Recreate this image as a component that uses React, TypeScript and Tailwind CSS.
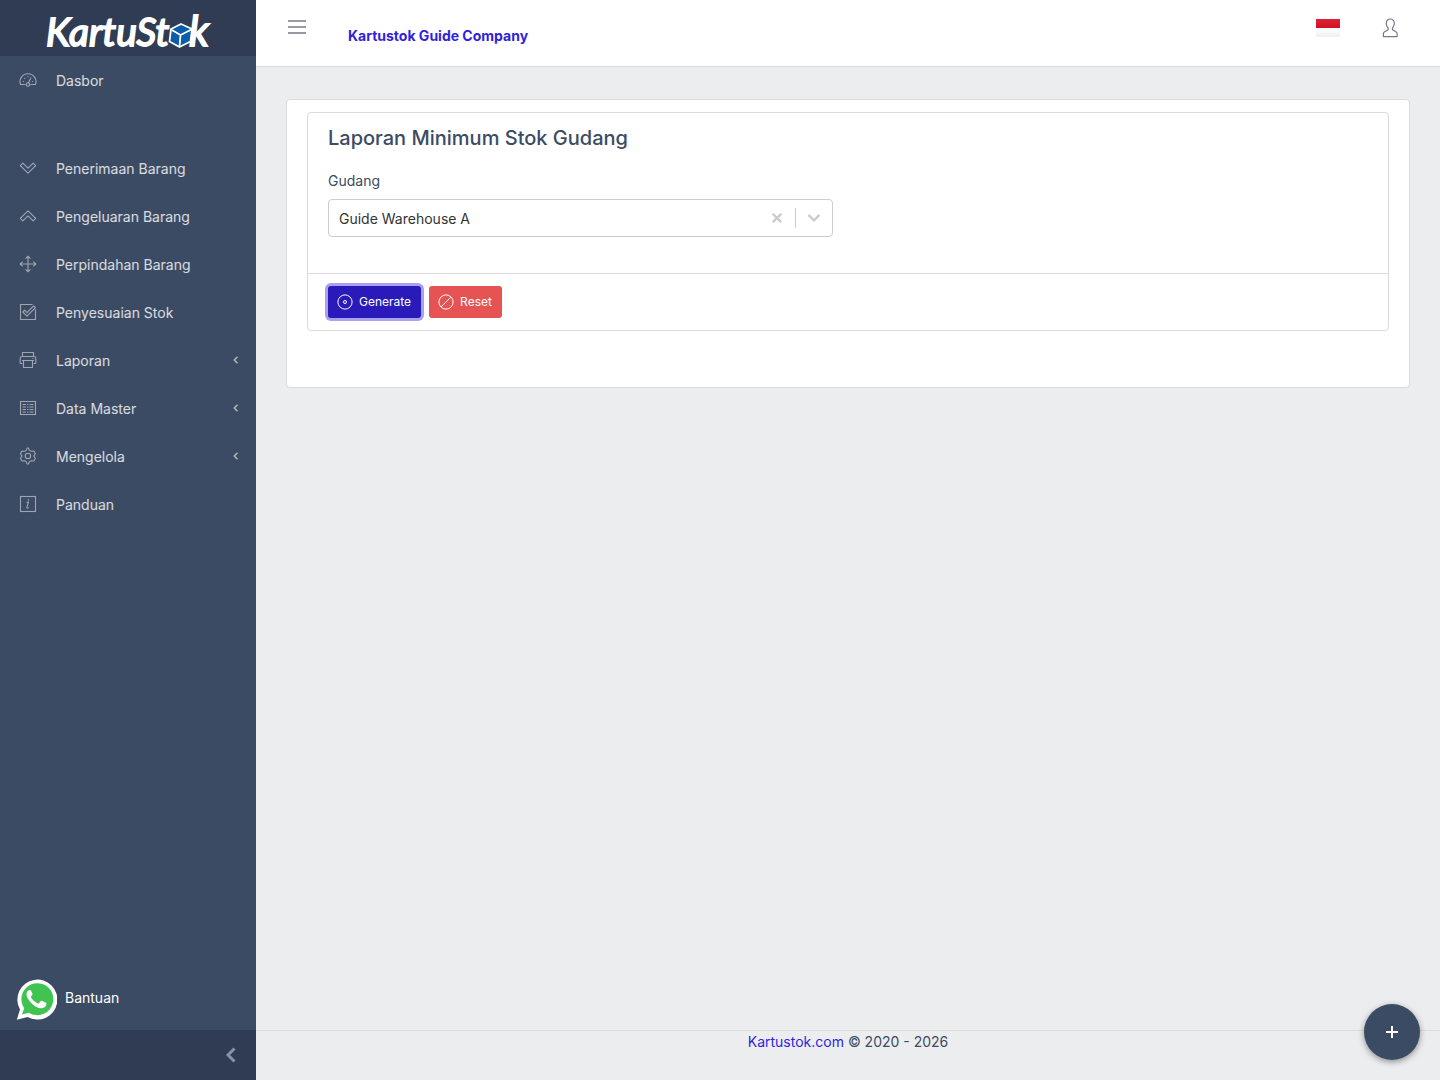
import { useState, ReactNode } from "react";

interface NavItem {
    label: string;
    icon: ReactNode;
    dropdown?: boolean;
}

function Icon({ children, className = "size-[18px]" }: { children: ReactNode; className?: string }) {
    return (
        <svg className={className} viewBox="0 0 18 18" fill="none" stroke="currentColor" strokeWidth="1.1" aria-hidden="true">
            {children}
        </svg>
    );
}

const dashboard: NavItem = {
    label: "Dasbor",
    icon: (
        <Icon>
            <path d="M6.5 13.5h-5a8 8 0 1 1 15 0h-5" />
            <circle cx="9" cy="13.5" r="1.7" />
            <path d="M9.5 11.8 12 6.5M4 10.5h1M13 10.5h1M5.3 6.8l.8.8M9 5v1" />
        </Icon>
    ),
};

const items: NavItem[] = [
    {
        label: "Penerimaan Barang",
        icon: <Icon><path d="M9 14.2 1.3 6.6l2.5-2.5L9 9.2l5.2-5.1 2.5 2.5z" strokeLinejoin="round" /></Icon>,
    },
    {
        label: "Pengeluaran Barang",
        icon: <Icon><path d="M9 3.8 1.3 11.4l2.5 2.5L9 8.8l5.2 5.1 2.5-2.5z" strokeLinejoin="round" /></Icon>,
    },
    {
        label: "Perpindahan Barang",
        icon: (
            <Icon>
                <path d="M9 1.5v15M1.5 9h15M6.6 3.6 9 1.2l2.4 2.4M6.6 14.4 9 16.8l2.4-2.4M3.6 6.6 1.2 9l2.4 2.4M14.4 6.6 16.8 9l-2.4 2.4" />
            </Icon>
        ),
    },
    {
        label: "Penyesuaian Stok",
        icon: (
            <Icon>
                <path d="M13.5 1.5h-12v15h15V6.5" />
                <path d="m8 13.2-4.2-4.2 1.8-1.8L8 9.6l6.6-6.8 1.9 1.8z" strokeLinejoin="round" />
            </Icon>
        ),
    },
    {
        label: "Laporan",
        dropdown: true,
        icon: (
            <Icon>
                <path d="M3.5 5.5v-4h11v4M3.5 12.5H1.8c-.4 0-.6-.2-.6-.6V7.3c0-1 .8-1.8 1.8-1.8h12c1 0 1.8.8 1.8 1.8v4.6c0 .4-.2.6-.6.6h-1.7M3 9.5h12M4.5 9.5v7h9v-7M13.5 7.5h1" />
            </Icon>
        ),
    },
    {
        label: "Data Master",
        dropdown: true,
        icon: (
            <Icon>
                <rect x="1.5" y="2.5" width="15" height="13" />
                <path d="M3.5 5.5H7M8 5.5h1.5M10.5 5.5h4M3.5 8H7M8 8h1.5M10.5 8h4M3.5 10.5H7M8 10.5h1.5M10.5 10.5h4M3.5 13H7M8 13h1.5M10.5 13h4" />
            </Icon>
        ),
    },
    {
        label: "Mengelola",
        dropdown: true,
        icon: (
            <Icon>
                <path
                    d="M7.2 3.4 8.2 1h1.2l1.2 2.4 1.5.9 2.7-.3 1.6 2.7-1.6 2.2v.2l1.6 2.2-1.6 2.7-2.7-.3-1.5.9L9.4 17H8.2l-1-2.4-1.5-.9-2.8.3-1.5-2.7L3 9.1v-.2L1.4 6.7 2.9 4l2.8.3z"
                    strokeLinejoin="round"
                />
                <circle cx="8.9" cy="9" r="2.7" />
            </Icon>
        ),
    },
    {
        label: "Panduan",
        icon: (
            <Icon>
                <rect x="1.5" y="1.5" width="15" height="15" />
                <path d="M7.5 7.5 9.5 7l-1.6 5.3c-.2.9.7 1.5 1.9.2M9.3 4v1.4" />
            </Icon>
        ),
    },
];

function NavLink({ item }: { item: NavItem }) {
    return (
        <a href="#" className="flex h-12 items-center pr-4 pl-[19px] text-sm text-white/80 hover:bg-[#321fdb] hover:text-white">
            <span className="text-white/50">{item.icon}</span>
            <span className="ml-[19px] pt-0.5">{item.label}</span>
            {item.dropdown && (
                <svg className="ml-auto h-2 w-2 text-white/60" viewBox="0 0 8 8" fill="none" stroke="currentColor" strokeWidth="1.5">
                    <path d="M5.5.8 2.3 4l3.2 3.2" />
                </svg>
            )}
        </a>
    );
}

function Logo() {
    return (
        <svg className="h-14 w-[170px]" viewBox="0 0 170 56" role="img" aria-label="KartuStok">
            <g fill="#fff" stroke="#fff" strokeWidth="1.8" fontFamily="Lato, sans-serif" fontWeight="400" fontStyle="italic">
                <text x="3" y="46" fontSize="39">KartuSt</text>
                <text x="146" y="46" fontSize="42">k</text>
            </g>
            {/* box mark standing in for the letter o */}
            <path d="M138 24 149 29l-1.500 12.500L136.500 47l-10-5.500L128 29z" fill="#0b5cab" stroke="#fff" strokeWidth="1.800" strokeLinejoin="round" />
            <path d="m128 29.500 9.500 5.500 11-5.500M137.500 35l-1 12" fill="none" stroke="#fff" strokeWidth="1.800" />
        </svg>
    );
}

function Sidebar() {
    return (
        <aside className="flex min-h-screen w-64 shrink-0 flex-col bg-[#3c4b64]">
            <a href="#" className="flex h-14 items-center justify-center bg-[#303c54]">
                <Logo />
            </a>
            <nav className="flex flex-1 flex-col">
                <NavLink item={dashboard} />
                <div className="h-10" />
                {items.map((item) => (
                    <NavLink key={item.label} item={item} />
                ))}
            </nav>
            <a href="#" className="mb-[10px] ml-4 flex items-center gap-2 text-sm text-white">
                <svg className="size-[41px]" viewBox="0 0 41 41" aria-hidden="true">
                    <path d="M.8 40.700 4 30.500A20 20 0 1 1 11.500 38z" fill="#fff" />
                    <path d="M6 35.500l2.200-6.300a16 16 0 1 1 4.700 4.500z" fill="#40c351" />
                    <path
                        d="M15 11.800c-.4-.8-.8-.8-1.300-.8-1 0-3.200 1.300-3.200 4.200 0 2.800 2 5.600 4.500 8.500 3 3.400 6.700 5.600 10.100 5.600 2.700 0 4.900-1.700 5.200-3.600.2-1.300.2-1.600-.3-1.900l-4-2c-.5-.2-.9-.2-1.300.3l-1.700 2.100c-.3.4-.7.4-1.200.2-3-1.300-5.300-3.400-6.800-6.100-.2-.5-.1-.8.200-1.100.9-1 1.500-1.600 1.300-2.300z"
                        fill="#fff"
                    />
                </svg>
                <span className="pb-1">Bantuan</span>
            </a>
            <button type="button" aria-label="Minimize sidebar" className="flex h-[50px] items-center justify-end bg-[#303c54] pr-5 text-[#8a93a2]">
                <svg className="h-4 w-[10px]" viewBox="0 0 10 16" fill="none" stroke="currentColor" strokeWidth="3">
                    <path d="M8.500 1.500 2 8l6.500 6.500" />
                </svg>
            </button>
        </aside>
    );
}

function Header() {
    return (
        <header className="flex h-[67px] items-start border-b border-[#d8dbe0] bg-white">
            <button type="button" aria-label="Toggle menu" className="mt-[18px] ml-8 text-[#7b7986]">
                <svg className="size-[18px]" viewBox="0 0 18 18" stroke="currentColor" strokeWidth="1.5">
                    <path d="M0 2.900h18M0 9h18M0 15.100h18" />
                </svg>
            </button>
            <a href="#" className="mt-[26px] ml-[42px] text-sm font-bold text-[#321fdb]">
                Kartustok Guide Company
            </a>
            <div className="mt-4 mr-10 ml-auto flex items-center gap-10">
                <button type="button" aria-label="Bahasa Indonesia">
                    <svg className="size-6" viewBox="0 0 24 24">
                        <defs>
                            <linearGradient id="flagRed" x2="0" y2="1">
                                <stop stopColor="#e12237" />
                                <stop offset="1" stopColor="#ce1126" />
                            </linearGradient>
                            <linearGradient id="flagWhite" x2="0" y2="1">
                                <stop stopColor="#fff" />
                                <stop offset="1" stopColor="#f0f0f0" />
                            </linearGradient>
                        </defs>
                        <rect y="3" width="24" height="9" fill="url(#flagRed)" />
                        <rect y="12" width="24" height="9" fill="url(#flagWhite)" />
                    </svg>
                </button>
                <button type="button" aria-label="Account" className="text-[#7b7986]">
                    <svg className="h-5 w-5" viewBox="0 0 20 20" fill="none" stroke="currentColor" strokeWidth="1.200" strokeLinejoin="round">
                        <path d="M12.500 11.800V10c1-1.200 1.800-2.700 1.800-4.500C14.300 2.500 12.600 1 10.300 1S6.300 2.500 6.300 5.500c0 1.800.8 3.300 1.800 4.500v1.800L4.300 14c-.6.400-.9.900-.9 1.600v3h13.700v-3c0-.7-.3-1.200-.9-1.600z" />
                    </svg>
                </button>
            </div>
        </header>
    );
}

function ReportCard() {
    const [warehouse, setWarehouse] = useState("a");

    return (
        <section className="rounded border border-[#d8dbe0] bg-white px-5 pt-3 pb-14">
            <form className="rounded border border-[#d8dbe0]" onSubmit={(e) => e.preventDefault()}>
                <div className="px-5 pt-3 pb-9">
                    <h1 className="mb-[19px] text-xl leading-[26px] font-medium text-[#3c4b64]">Laporan Minimum Stok Gudang</h1>
                    <label htmlFor="warehouse" className="mb-2 block text-sm leading-[21px] text-[#3c4b64]">
                        Gudang
                    </label>
                    <div className="relative w-[calc(50%-15px)]">
                        <select
                            id="warehouse"
                            value={warehouse}
                            onChange={(e) => setWarehouse(e.target.value)}
                            className="block h-[38px] w-full appearance-none rounded border border-[#cccccc] bg-white pt-0.5 pr-20 pl-[10px] text-sm text-[#333333]"
                        >
                            <option value=""></option>
                            <option value="a">Guide Warehouse A</option>
                        </select>
                        <div className="pointer-events-none absolute inset-y-0 right-px flex items-center text-[#cccccc]">
                            <button type="button" aria-label="Clear" onClick={() => setWarehouse("")} className="pointer-events-auto mr-[13px]">
                                <svg className="size-[10px]" viewBox="0 0 10 10" fill="none" stroke="currentColor" strokeWidth="2.400">
                                    <path d="m.8.8 8.400 8.400M9.200.8.8 9.200" />
                                </svg>
                            </button>
                            <span className="h-5 w-px bg-[#cccccc]" />
                            <svg className="mx-3 h-2 w-3" viewBox="0 0 12 8" fill="none" stroke="currentColor" strokeWidth="2.400" strokeLinecap="round">
                                <path d="m1.200 1.600 4.800 4.700 4.800-4.700" />
                            </svg>
                        </div>
                    </div>
                </div>
                <div className="flex gap-2 border-t border-[#d8dbe0] px-5 py-3">
                    <button type="submit" className="flex h-8 items-center gap-1.5 rounded-[3px] bg-[#2a1ab9] pr-[10px] pl-[9px] text-xs text-white ring-3 ring-[#a9a0ef]">
                        <Icon className="size-4">
                            <circle cx="9" cy="9" r="8" />
                            <circle cx="9" cy="9" r="1.700" />
                        </Icon>
                        Generate
                    </button>
                    <button type="reset" className="flex h-8 items-center gap-1.5 rounded-[3px] bg-[#e55353] pr-[10px] pl-[9px] text-xs text-white">
                        <Icon className="size-4">
                            <circle cx="9" cy="9" r="8" />
                            <path d="M3.400 14.600 14.600 3.400" />
                        </Icon>
                        Reset
                    </button>
                </div>
            </form>
        </section>
    );
}

export default function App() {
    return (
        <div className="flex min-h-screen bg-[#ebedef] font-[Inter,sans-serif] text-[#3c4b64]">
            <Sidebar />
            <div className="flex min-w-0 flex-1 flex-col">
                <Header />
                <main className="flex-1 px-[30px] pt-8">
                    <ReportCard />
                </main>
                <footer className="h-[50px] border-t border-[#d8dbe0] text-center text-sm leading-[22px]">
                    <a href="#" className="text-[#321fdb]">Kartustok.com</a> © 2020 - 2026
                </footer>
            </div>
            {/* Floating action button */}
            <button
                type="button"
                aria-label="Add"
                className="fixed right-5 bottom-5 flex size-14 items-center justify-center rounded-full bg-[#3c4b64] text-white shadow-[0_2px_6px_rgba(0,0,0,0.4)]"
            >
                <svg className="size-3" viewBox="0 0 12 12" stroke="currentColor" strokeWidth="2">
                    <path d="M6 0v12M0 6h12" />
                </svg>
            </button>
        </div>
    );
}
